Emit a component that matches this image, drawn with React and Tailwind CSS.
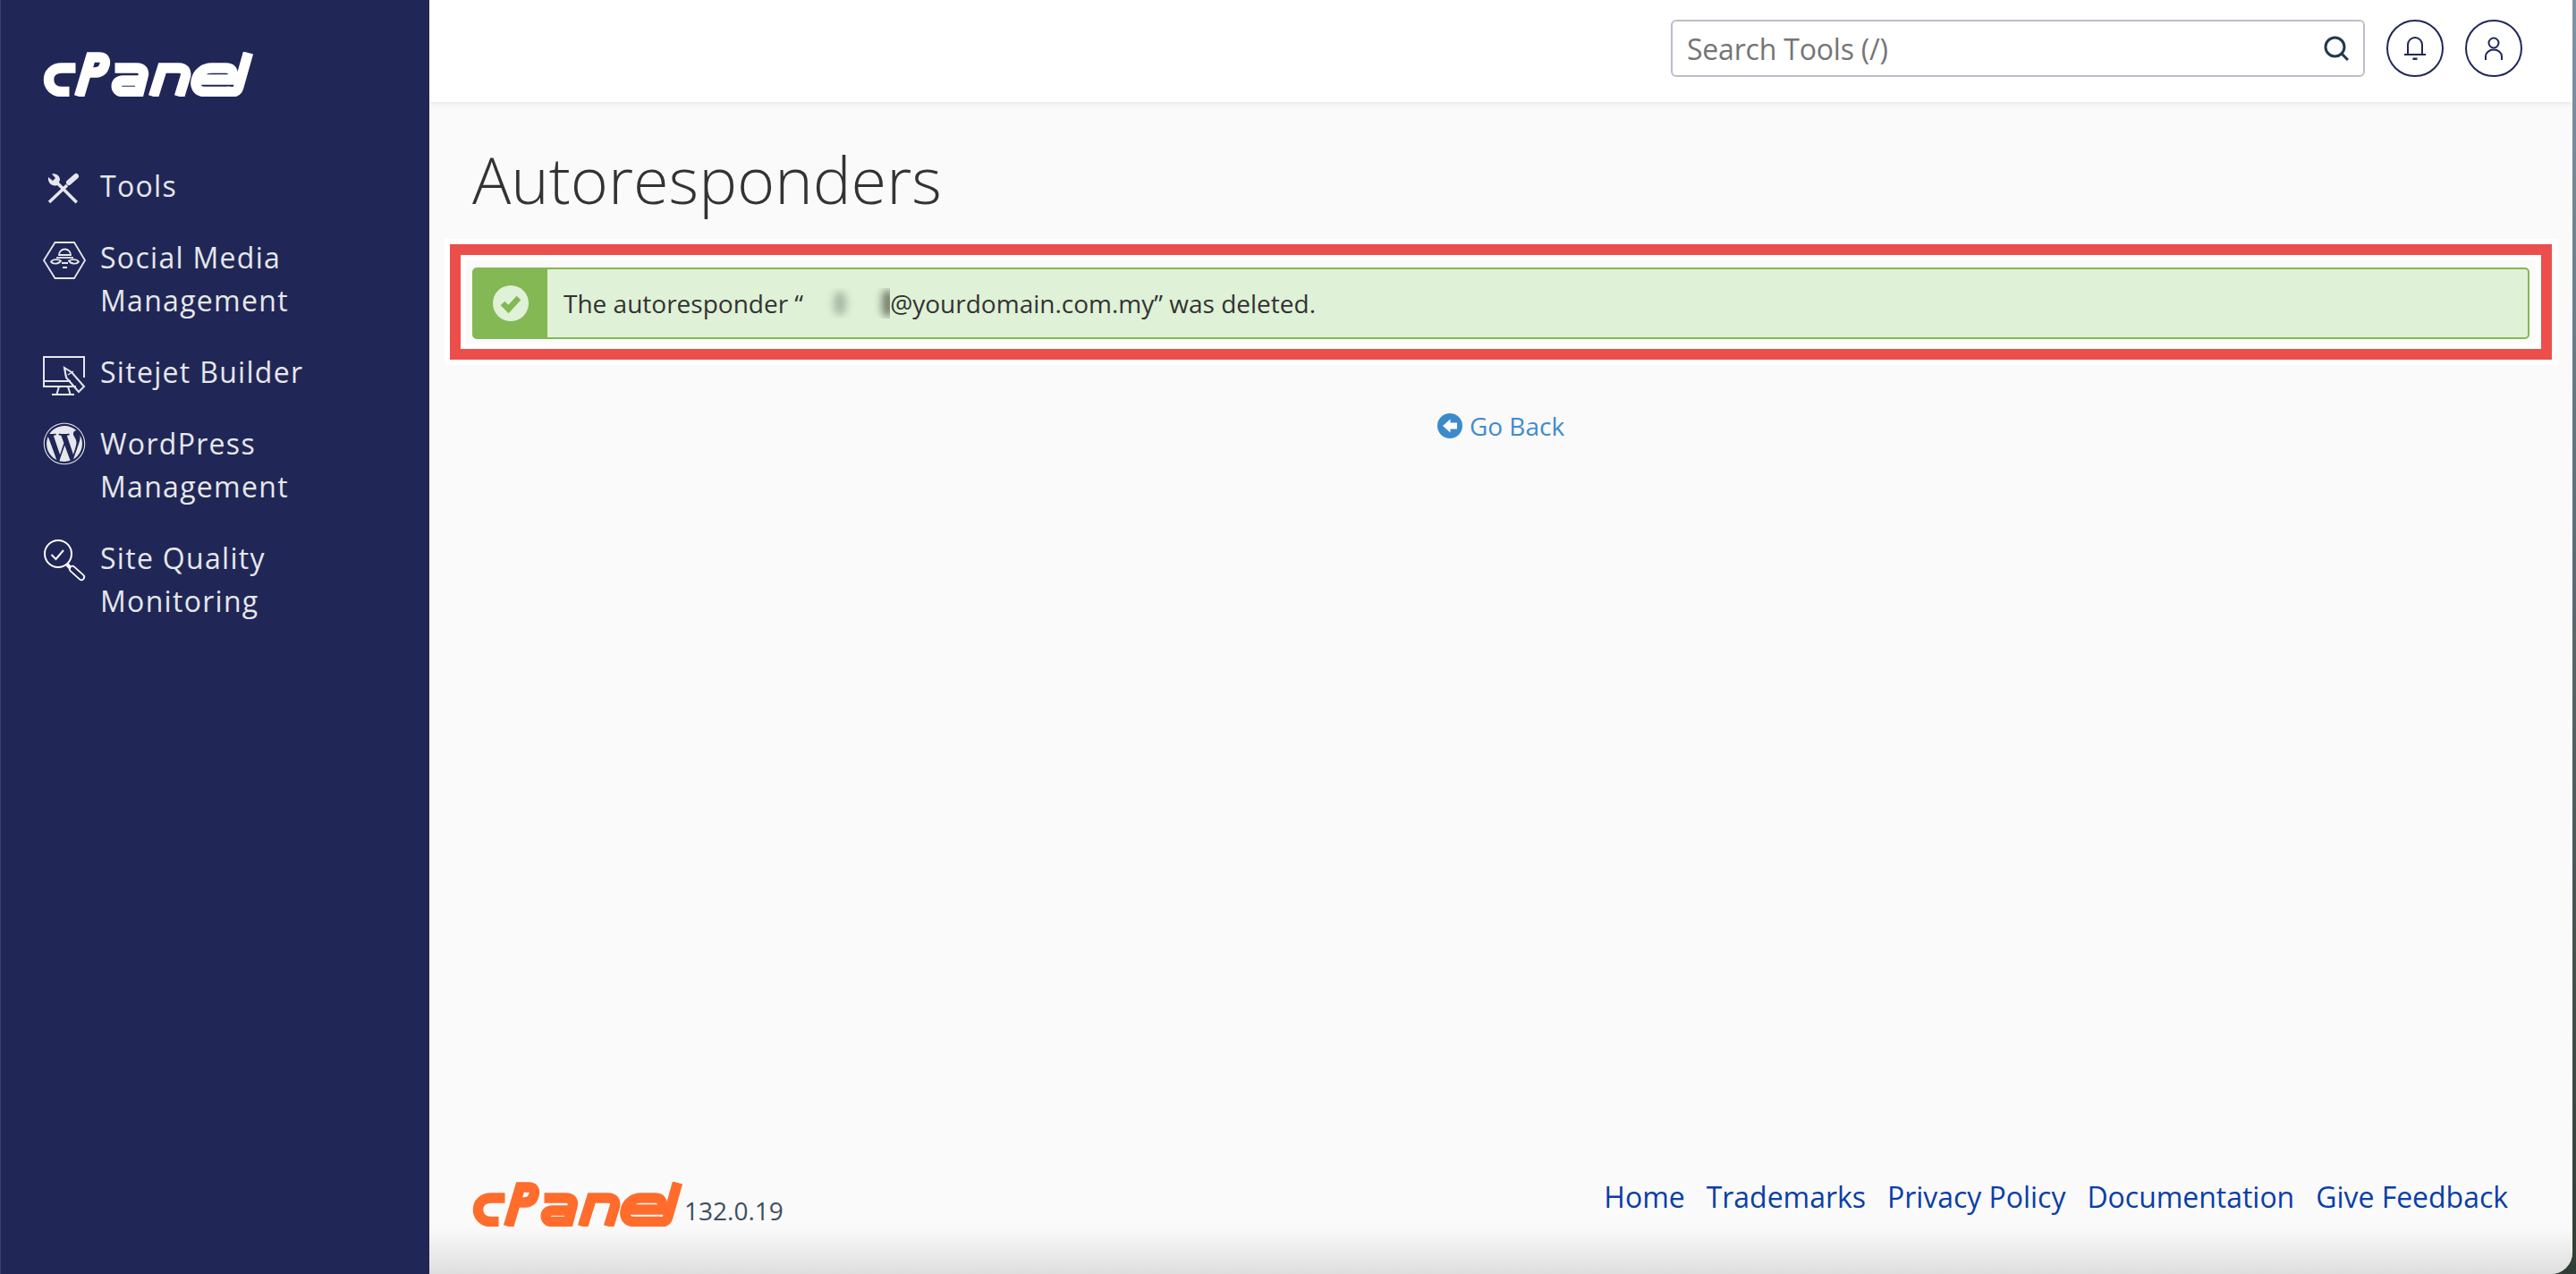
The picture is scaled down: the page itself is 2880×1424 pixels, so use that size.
import React from "react";
import { FaWordpress } from "react-icons/fa";

const Logo = ({ className }) => (
  <svg viewBox="0 0 234 50" className={className} fill="none" stroke="currentColor" strokeWidth="11.500">
    <path d="M36 18H21C11 18 6 24 6 31C6 38 11 44.500 20 44.500H29" />
    <path d="M40 50L53 6H63C69 6 70 11 68 16C66.500 21 62 23 57 23H48" />
    <path d="M80 18H104C111 18 113 22 111.500 27L107 44.500H88C80 44.500 79 32 89 32H108" />
    <path d="M123 50L133 18H151C158 18 160 22 159 27L152 50" />
    <path d="M209 44.500H180C172 44.500 169 38 171 31C173 23 180 18 188 18H204C212 18 213 24 211 31H176" />
    <path d="M229 1L218 40C216 46 211 44.500 205 44.500" />
  </svg>
);

const ToolsIcon = () => (
  <svg viewBox="0 0 48 48" className="w-12 h-12">
    <path
      d="M6 14L11 18L14 15L10 10.500C14 9.500 19 12 19 17L18 20L39 41L36.500 43.500L16 23C11 25 5 21 6 14Z"
      fill="#e6e7ec"
    />
    <path d="M7 42L27 23" stroke="#e6e7ec" strokeWidth="3.500" fill="none" />
    <path d="M29 20L37 13" stroke="#e6e7ec" strokeWidth="6" strokeLinecap="round" fill="none" />
  </svg>
);

const SocialIcon = () => (
  <svg viewBox="0 0 48 48" className="w-12 h-12 overflow-visible" fill="none" stroke="#e6e7ec" strokeWidth="1.800">
    <path d="M1 27L13.500 7H35L47 27L35 47H13.500Z" />
    <path d="M18 21A6.500 6.500 0 0 1 31 21Z" />
    <path d="M15 24H34" />
    <path d="M9 28.500C11 25.500 17 25.500 20 27.500C18 31 11 32 9 28.500Z" />
    <path d="M40 28.500C38 25.500 32 25.500 29 27.500C31 31 38 32 40 28.500Z" />
    <path d="M21 30H28M22 35H27" />
  </svg>
);

const MonitorIcon = () => (
  <svg viewBox="0 0 48 48" className="w-12 h-12 overflow-visible" fill="none" stroke="#e6e7ec" strokeWidth="2">
    <path d="M37 40H1V7H46V30" />
    <path d="M1 34H31" />
    <path d="M18 40L15.500 48.500M28 40L30.500 48.500M10 49H35" />
    <path d="M24 19L32 24L46 40L40 46L26 30Z" />
    <path d="M24 19L26 30M28 27L34 23" strokeWidth="1.500" />
  </svg>
);

const QualityIcon = () => (
  <svg viewBox="0 0 48 48" className="w-12 h-12 overflow-visible" fill="none" stroke="#ffffff" strokeWidth="2">
    <circle cx="17" cy="19" r="15" />
    <path d="M9.500 20L14.500 25L23 15" />
    <path d="M27 31L31 35" strokeWidth="4" />
    <path d="M33 36L43 45" strokeWidth="8" strokeLinecap="round" />
    <path d="M33 36L43 45" strokeWidth="4.500" strokeLinecap="round" stroke="#202756" />
  </svg>
);

const NavItem = ({ icon, children }) => (
  <a className="flex gap-4 text-[32px] leading-[48px] tracking-[1.300px] text-[#e6e7ec]">
    <span className="w-12 h-12 shrink-0">{icon}</span>
    <span>{children}</span>
  </a>
);

export default function App() {
  return (
    <div
      className="flex h-screen w-full bg-gradient-to-b from-[#8094a8] to-[#2f3f35] pr-[4px] overflow-hidden"
      style={{ fontFamily: '"Open Sans", sans-serif' }}
    >
      <aside className="w-[480px] shrink-0 bg-[#202756] border-l border-[#3a4270] pl-[47px]">
        <Logo className="w-[235px] h-[50px] mt-[58px] text-white" />
        <nav className="flex flex-col gap-8 mt-[76px]">
          <NavItem icon={<ToolsIcon />}>Tools</NavItem>
          <NavItem icon={<SocialIcon />}>
            Social Media
            <br />
            Management
          </NavItem>
          <NavItem icon={<MonitorIcon />}>Sitejet Builder</NavItem>
          <NavItem icon={<FaWordpress className="w-12 h-12 text-[#e6e7ec]" />}>
            WordPress
            <br />
            Management
          </NavItem>
          <NavItem icon={<QualityIcon />}>
            Site Quality
            <br />
            Monitoring
          </NavItem>
        </nav>
      </aside>

      <div className="relative flex-1 flex flex-col bg-[#fafafa] rounded-br-[24px] overflow-hidden">
        <header className="h-[114px] shrink-0 bg-white shadow-[0_2px_6px_rgba(0,0,0,0.08)] flex items-start justify-end gap-6 pt-[22px] pr-[56px]">
          <div className="w-[776px] h-[64px] rounded-[6px] border-2 border-[#bcbdce] flex items-center justify-between pl-[16px] pr-[16px]">
            <span className="pt-[2px] text-[32px] text-[#757575] tracking-[-0.2px]">Search Tools (/)</span>
            <svg viewBox="0 0 28 28" className="w-7 h-7" fill="none" stroke="#23384f" strokeWidth="3">
              <circle cx="12.500" cy="12.500" r="10.500" />
              <path d="M20 20L27 27" />
            </svg>
          </div>
          <button className="w-16 h-16 rounded-full border-2 border-[#20275a] flex items-center justify-center">
            <svg viewBox="0 0 24 26" className="w-6 h-[26px]" fill="none" stroke="#20275a" strokeWidth="2">
              <path d="M4 19V9A8 8 0 0 1 20 9V19" />
              <path d="M0 20H24" />
              <path d="M9.500 25H14.500" strokeWidth="3" />
            </svg>
          </button>
          <button className="w-16 h-16 rounded-full border-2 border-[#20275a] flex items-center justify-center">
            <svg viewBox="0 0 20 26" className="w-5 h-[26px]" fill="none" stroke="#20275a" strokeWidth="2">
              <circle cx="10" cy="7" r="5.500" />
              <path d="M1 26V22A9 7.500 0 0 1 19 22V26" />
            </svg>
          </button>
        </header>

        <main className="flex-1 flex flex-col px-[17px]">
          <h1 className="h-[153px] shrink-0 flex items-center pt-[18px] pl-[31px] text-[72px] font-light text-[#333333]">
            Autoresponders
          </h1>

          <div className="border-[6px] border-white">
            <div className="border-[12px] border-[#ec4e4c]">
              <div className="border-[6px] border-white">
                <div className="pt-[8px] pb-[5px] pl-[7px] pr-[7px]">
                  <div className="flex h-20 rounded-[5px] border-2 border-[#84b854] bg-[#dff1d6]">
                    <div className="w-[82px] shrink-0 bg-[#84b854] flex items-center justify-center">
                      <svg viewBox="0 0 40 40" className="w-10 h-10">
                        <circle cx="20" cy="20" r="20" fill="#dff1d6" />
                        <path d="M11 20L17.500 26.500L29 14" fill="none" stroke="#84b854" strokeWidth="6.500" />
                      </svg>
                    </div>
                    <p className="flex items-center pl-[18px] text-[28px] text-[#333333]">
                      The autoresponder “
                      <span className="relative inline-block w-[97px] h-[34px] overflow-hidden">
                        <span className="absolute left-[34px] top-[4px] w-[14px] h-[26px] rounded-full bg-[#a9b9a6] blur-[4px]" />
                        <span className="absolute left-[88px] top-[2px] w-[14px] h-[30px] rounded-full bg-[#77816f] blur-[4px]" />
                      </span>
                      @yourdomain.com.my” was deleted.
                    </p>
                  </div>
                </div>
              </div>
            </div>
          </div>

          <a className="mt-[48px] flex items-center justify-center gap-2 text-[28px] leading-[40px] text-[#428bca]">
            <svg viewBox="0 0 28 28" className="w-7 h-7">
              <circle cx="14" cy="14" r="14" fill="#3d8acb" />
              <path d="M6 14L14.500 6.500V10.500H22V17.500H14.500V21.500Z" fill="#ffffff" />
            </svg>
            Go Back
          </a>

          <footer className="mt-auto mb-[51px] flex items-start justify-between pl-[31px] pr-[55px]">
            <div className="flex items-start gap-[2px] mt-[5px]">
              <Logo className="w-[235px] h-[50px] text-[#ff6c2c]" />
              <span className="mt-[12px] text-[28px] leading-[40px] text-[#3d4f5f]">132.0.19</span>
            </div>
            <div className="flex gap-[24px] pt-[2px] text-[32px] leading-[40px] tracking-[-0.03px] text-[#0a3ea8]">
              <a>Home</a>
              <a>Trademarks</a>
              <a>Privacy Policy</a>
              <a>Documentation</a>
              <a>Give Feedback</a>
            </div>
          </footer>
        </main>

        <div className="absolute bottom-0 inset-x-0 h-[52px] bg-gradient-to-b from-transparent to-[#dedede] pointer-events-none" />
      </div>
    </div>
  );
}
